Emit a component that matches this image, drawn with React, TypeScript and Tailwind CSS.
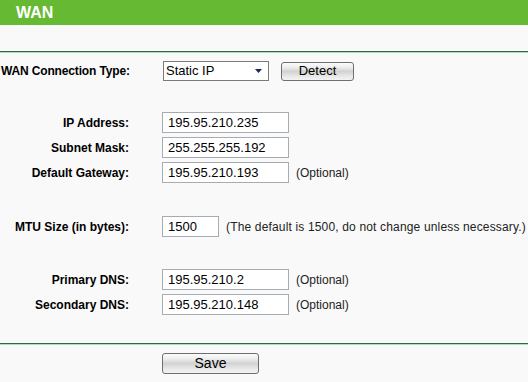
import React from "react";

const font = { fontFamily: '"Liberation Sans", Arial, sans-serif' };

function Label({ children }: { children: React.ReactNode }) {
  return (
    <div className="w-[129px] shrink-0 text-right text-[12px] font-bold text-black whitespace-nowrap">
      {children}
    </div>
  );
}

function TextBox({ value, w = "w-[127px]" }: { value: string; w?: string }) {
  return (
    <div
      className={`${w} h-[21px] shrink-0 border border-[#a5acb2] bg-white pl-[5px] text-[13px] leading-[19px] text-black`}
    >
      {value}
    </div>
  );
}

function Optional() {
  return <span className="ml-[7px] text-[12px] text-[#222]">(Optional)</span>;
}

function GrayButton({ label, cls }: { label: string; cls: string }) {
  return (
    <div
      className={`${cls} flex items-center justify-center rounded-[3px] border border-[#6f6f6f] bg-[linear-gradient(to_bottom,#fbfbfb_0%,#eeeeee_25%,#d2d2d2_50%,#e6e6e6_75%,#f4f4f4_100%)] text-black`}
    >
      {label}
    </div>
  );
}

export default function App() {
  return (
    <div className="w-[528px] h-[382px] bg-[#f9f9f9] overflow-hidden" style={font}>
      <div className="h-[25px] bg-[#66b933] pl-[16px] text-[16px] font-bold leading-[25px] text-white">
        WAN
      </div>
      <div className="h-[26px]" />
      <div className="h-[1px] bg-[#2c6b47]" />
      <div className="h-[1px] bg-[#b6d6c1]" />

      <div className="mt-[8px] flex h-[20px] items-center">
        <div className="w-[130px] shrink-0 pl-[1px] text-[12px] font-bold tracking-[-0.15px] text-black whitespace-nowrap">
          WAN Connection Type:
        </div>
        <div className="ml-[33px] flex h-[20px] w-[106px] items-center justify-between border border-[#7a7a7a] bg-white pl-[2px] pr-[5px] text-[13px] text-black">
          <span>Static IP</span>
          <svg width="8" height="5" viewBox="0 0 8 5">
            <path d="M0 0 H7 L3.5 4 Z" fill="#1c2a5a" />
          </svg>
        </div>
        <GrayButton label="Detect" cls="ml-[12px] h-[19px] w-[73px] text-[13px]" />
      </div>

      <div className="mt-[31px] flex flex-col gap-[4px]">
        <div className="flex h-[21px] items-center">
          <Label>IP Address:</Label>
          <div className="ml-[33px]">
            <TextBox value="195.95.210.235" />
          </div>
        </div>
        <div className="flex h-[21px] items-center">
          <Label>Subnet Mask:</Label>
          <div className="ml-[33px]">
            <TextBox value="255.255.255.192" />
          </div>
        </div>
        <div className="flex h-[21px] items-center">
          <Label>Default Gateway:</Label>
          <div className="ml-[33px] flex items-center">
            <TextBox value="195.95.210.193" />
            <Optional />
          </div>
        </div>
      </div>

      <div className="mt-[33px] flex h-[21px] items-center">
        <Label>MTU Size (in bytes):</Label>
        <div className="ml-[33px] flex items-center">
          <TextBox value="1500" w="w-[57px]" />
          <span className="ml-[7px] text-[12px] tracking-[0.16px] text-[#222] whitespace-nowrap">
            (The default is 1500, do not change unless necessary.)
          </span>
        </div>
      </div>

      <div className="mt-[32px] flex flex-col gap-[4px]">
        <div className="flex h-[21px] items-center">
          <Label>Primary DNS:</Label>
          <div className="ml-[33px] flex items-center">
            <TextBox value="195.95.210.2" />
            <Optional />
          </div>
        </div>
        <div className="flex h-[21px] items-center">
          <Label>Secondary DNS:</Label>
          <div className="ml-[33px] flex items-center">
            <TextBox value="195.95.210.148" />
            <Optional />
          </div>
        </div>
      </div>

      <div className="mt-[28px] h-[1px] bg-[#2c6b47]" />
      <div className="h-[1px] bg-[#b6d6c1]" />

      <div className="mt-[8px] pl-[162px]">
        <GrayButton label="Save" cls="h-[21px] w-[97px] text-[14px]" />
      </div>
    </div>
  );
}
